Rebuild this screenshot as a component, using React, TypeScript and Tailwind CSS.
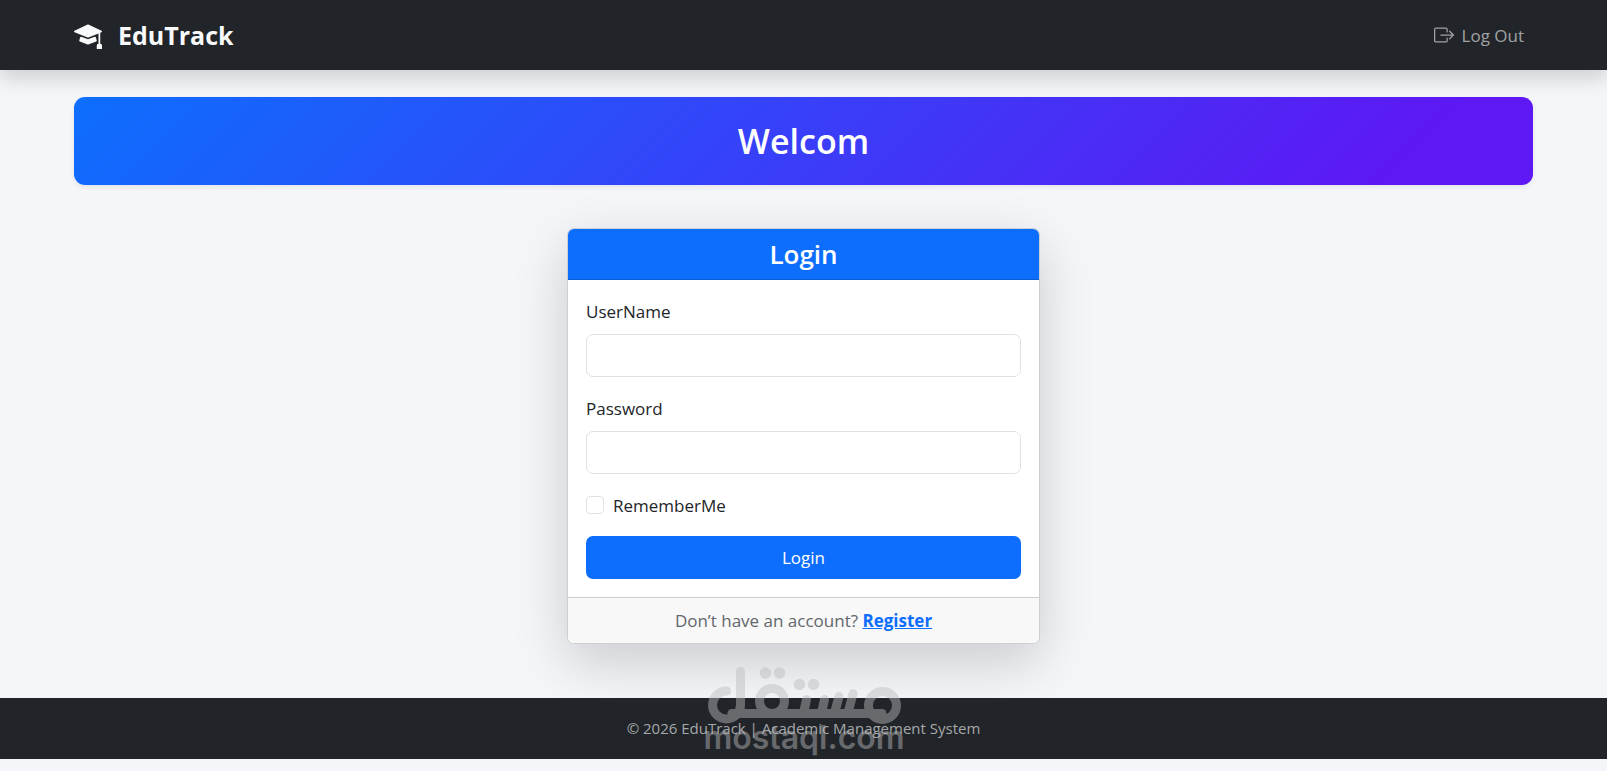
import { useState } from 'react'
import type { FormEvent } from 'react'
import { BsBoxArrowRight, BsMortarboardFill } from 'react-icons/bs'

const inputClass =
  'block w-full h-[43px] px-3 bg-white border border-[#dee2e6] rounded-[7px] outline-none focus:border-[#86b7fe]'

function Navbar() {
  return (
    <nav className="relative bg-[#212529] shadow-[0_9px_18px_rgba(0,0,0,0.15)]">
      <div className="flex items-center justify-between h-[70px] mx-[74px]">
        <a href="#" className="flex items-center gap-4 text-[#f8f9fa] text-[25px] leading-9 font-bold">
          <BsMortarboardFill className="size-7" />
          EduTrack
        </a>
        <a href="#logout" className="flex items-center gap-2 px-[9px] text-[#a0a2a3] leading-[27px]">
          <BsBoxArrowRight className="size-5" />
          Log Out
        </a>
      </div>
    </nav>
  )
}

function LoginCard() {
  const [remember, setRemember] = useState(false)

  const handleSubmit = (e: FormEvent) => e.preventDefault()

  return (
    <div className="w-full max-w-[473px] mx-auto bg-white border border-[#cdced0] rounded-[7px] overflow-hidden shadow-[0_18px_54px_rgba(0,0,0,0.175)]">
      <div className="h-[51px] flex items-center justify-center bg-[#0d6efd] border-b border-[#0b5ccf]">
        <h2 className="text-white text-[26px] leading-8 font-semibold">Login</h2>
      </div>

      <form onSubmit={handleSubmit} className="flex flex-col gap-[18px] p-[18px]">
        <div className="flex flex-col gap-[9px]">
          <label htmlFor="username">UserName</label>
          <input id="username" type="text" className={inputClass} />
        </div>
        <div className="flex flex-col gap-[9px]">
          <label htmlFor="password">Password</label>
          <input id="password" type="password" className={inputClass} />
        </div>
        <div className="flex items-center gap-[9px] h-[26px]">
          <input
            id="remember"
            type="checkbox"
            checked={remember}
            onChange={e => setRemember(e.target.checked)}
            className="appearance-none size-[18px] bg-white border border-[#dee2e6] rounded-[4px] checked:bg-[#0d6efd]"
          />
          <label htmlFor="remember">RememberMe</label>
        </div>
        <button type="submit" className="h-[43px] bg-[#0d6efd] hover:bg-[#0b5ed7] text-white rounded-[7px]">
          Login
        </button>
      </form>

      <div className="py-[9px] text-center bg-[#f8f8f8] border-t border-[#cdced0]">
        <span className="text-[#62676b]">Don’t have an account? </span>
        <a href="#register" className="text-[#0d6efd] font-bold underline">Register</a>
      </div>
    </div>
  )
}

function Watermark() {
  return (
    <svg
      viewBox="0 0 206 105"
      className="absolute bottom-[-6px] left-1/2 -translate-x-1/2 w-[206px] h-[105px] pointer-events-none"
      aria-hidden="true"
    >
      <g opacity="0.45">
        <g fill="none" stroke="#bcbcbf" strokeWidth="9" strokeLinecap="round" strokeLinejoin="round">
          {/* lam */}
          <path d="M39.5 11.500V45a14 14 0 1 1-14-14" />
          <path d="M31 53.500H181" />
          {/* qaf */}
          <circle cx="71" cy="41" r="12.500" />
          {/* teeth of ta and sin */}
          <path d="M105.500 39.500L102.500 53M123.500 39.500L120.500 53M138 36.500L133.500 53M152 33.500L147 53" />
          {/* mim */}
          <circle cx="181.500" cy="45.500" r="14" />
        </g>
        <g fill="#bcbcbf">
          <circle cx="64.500" cy="13" r="5.800" />
          <circle cx="78.500" cy="13" r="5.800" />
          <circle cx="98.500" cy="24.500" r="5.800" />
          <circle cx="112.500" cy="24.500" r="5.800" />
          <text x="103" y="89" textAnchor="middle" className="font-['Inter',sans-serif] text-[32px] font-semibold">
            mostaql.com
          </text>
        </g>
      </g>
    </svg>
  )
}

export default function App() {
  return (
    <div className="min-h-screen bg-[#f4f6fa] text-[#212529] font-['Open_Sans','Noto_Sans',sans-serif] text-[17px] leading-[27px]">
      <Navbar />

      <main className="mx-[74px] pt-[27px] pb-[54px]">
        <div className="flex items-center justify-center h-[88px] mb-[43px] rounded-[11px] bg-[linear-gradient(135deg,#0d6efd,#5d18f4_90%)] shadow-[0_2px_5px_rgba(0,0,0,0.075)]">
          <h1 className="text-white text-[34px] leading-[43px] font-semibold">Welcom</h1>
        </div>
        <LoginCard />
      </main>

      <footer className="relative bg-[#212529] py-[18px] text-center text-[15px] leading-[25px] text-[#a6a8a9]">
        © 2026 EduTrack | Academic Management System
        <Watermark />
      </footer>
    </div>
  )
}
